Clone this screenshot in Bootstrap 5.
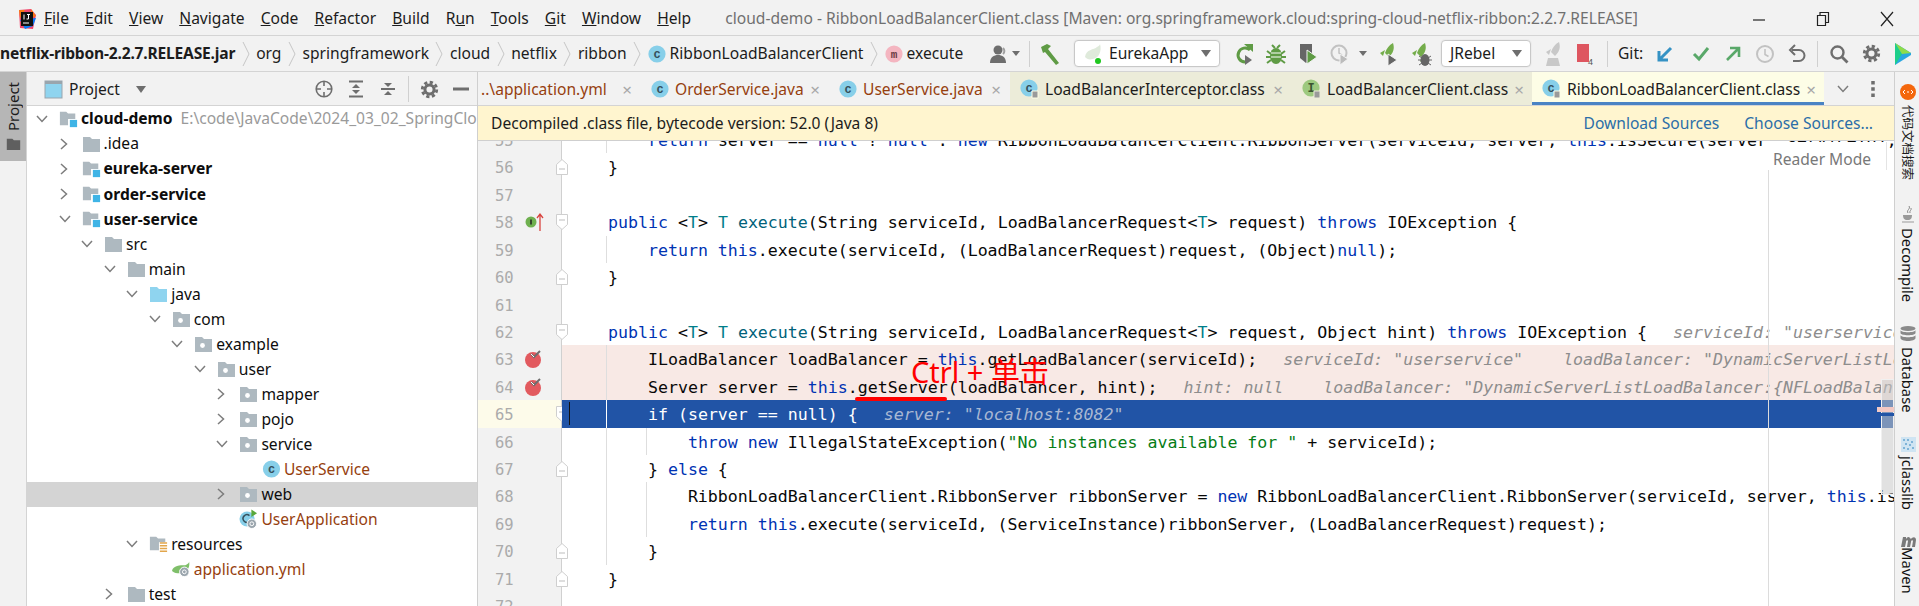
<!DOCTYPE html>
<html lang="en"><head><meta charset="utf-8"><title>IDE</title>
<link rel="stylesheet" href="https://cdn.jsdelivr.net/npm/bootstrap@5.3.0/dist/css/bootstrap.min.css">
<style>
html,body{margin:0;height:606px;overflow:hidden}
body{font:15.6px/1.3 "Noto Sans","Noto Sans CJK SC",sans-serif;color:#1c1c1c;background:#f2f2f2}
svg{display:block;flex:none}
.ide-root{width:1919px;height:606px}
.menu-bar{height:36px;border-bottom:1px solid #d4d4d4;padding:2px 0 0 17px;flex:none}
.logo-slot{width:27px}
.menu-item{margin-right:16.1px}
.win-title{color:#707070;margin-left:18px;white-space:nowrap}
.win-btn{width:64px;display:flex;justify-content:center}
.tool-bar{height:36px;border-bottom:1px solid #d4d4d4;flex:none}
.crumbs{width:985px;white-space:nowrap;flex:none}
.crumb-sep{width:21px;display:flex;justify-content:center;flex:none}
.jar{letter-spacing:-.2px}
.crumb-ico{margin-right:4px}
.user-slot{width:35px;flex:none;gap:3px;padding-left:4px}
.combo{height:27px;background:#fff;border:1px solid #c8c8c8;border-radius:4px;box-shadow:0 0 0 1px #ececec;padding:0 8px;flex:none}
.combo-a{width:146px;margin-left:8px}
.combo-b{width:90px;margin-left:4px}
.tri{width:0;height:0;border-left:5px solid transparent;border-right:5px solid transparent;border-top:7px solid #6e6e6e;flex:none}
.tri-sm{border-left-width:4px;border-right-width:4px;border-top-width:5px}
.slot{width:32px;display:flex;justify-content:center;flex:none}
.slot-t{width:14px}
.ml-3px{margin-left:3px}.ml-4px{margin-left:4px}.ml-6px{margin-left:6px}.ml-8px{margin-left:8px}
.v-sep{width:1px;height:26px;background:#d0d0d0;flex:none}
.sep-a{margin-left:9px;margin-right:4px}
.sep-b{margin:0 10px 0 6px}
.sep-c{margin:0 5px 0 4px}
.sep-d{margin:0 4px}
.git-lbl{width:31px;flex:none}
.left-strip{width:27px;border-right:1px solid #d4d4d4;flex:none}
.strip-btn{background:#b6b6b6;height:89px;padding-top:10px;gap:7px}
.vtext{writing-mode:vertical-rl;white-space:nowrap;font-size:15px;line-height:1}
.vup{transform:rotate(180deg)}
.side-panel{width:451px;border-right:1px solid #cfcfcf;flex:none;background:#fff}
.panel-head{height:34px;background:#f2f2f2;border-bottom:1px solid #d4d4d4;padding:1px 0 0 17px;flex:none}
.ph-title{margin:0 16px 0 6px}
.tree-row{height:25.05px;padding-left:calc(8px + 22.55px*var(--lv));white-space:nowrap;color:#0d0d0d;flex:none}
.tree-row.selected{background:#d4d4d4}
.tw{width:24px;flex:none}
.ti{width:19px;flex:none;margin-right:3px}
.bold{font-weight:700}
.muted-path{color:#9a9a9a;margin-left:8px}
.mod{color:#96400f}
.tab-bar{height:34px;background:#f2f2f2;border-bottom:1px solid #d4d4d4;flex:none}
.tab-x{color:#a8a8a8;font-size:17px;flex:none;margin-left:auto;line-height:1}
.ed-tab{height:33px;white-space:nowrap;flex:none;padding:1px 9px 0 10px;gap:6px}
.tw1{width:163px;padding-left:3px}.tw2{width:188px}.tw3{width:181px}.tw4{width:282px}.tw5{width:240px}.tw6{width:292px}
.tab-c{background:#ececd9}
.tab-on{background:#fdfde6;box-shadow:inset 0 -3px 0 #4a83c4}
.tab-more{width:70px;padding-left:12px;gap:21px;flex:none}
.notice{height:35px;background:#fff5cf;border-bottom:1px solid #cfcfcf;padding-left:13px;flex:none;position:relative;z-index:2;white-space:nowrap}
.notice a{color:#2b6ea8;text-decoration:none}
.notice-links{gap:25px;padding-right:21px}
.code-pane{background:#fff}
.code-scroll{margin-top:-15px}
.cl{height:27.43px;white-space:pre;font:16.6px/30px "DejaVu Sans Mono",monospace;color:#080808;flex:none}
.gut{width:84px;flex:none;background:#f2f2f2;border-right:1px solid #d0d0d0;position:relative;color:#ababab;padding-left:17px;font-size:15.5px}
.txt{flex:1;overflow:hidden;padding-left:6px;position:relative}
.g1{background:linear-gradient(#dedede,#dedede) no-repeat 44px 0/1px 100%}
.g2{background:linear-gradient(#dedede,#dedede) no-repeat 44px 0/1px 100%,linear-gradient(#dedede,#dedede) no-repeat 84px 0/1px 100%}
.g1.bp{background-color:#f8e9e5}
.cur{background:linear-gradient(#fff,#fff) no-repeat 44px 0/1px 100%,#2154a6;color:#fff}
.gcur{background:#fdfbea}
.caret-bar{position:absolute;left:7px;top:2px;width:1px;height:23px;background:#111}
.k{color:#0033b3}.t{color:#007e8a}.m{color:#00627a}.s{color:#067d17}
.hint{color:#8d8d8d;font-style:italic}
.cur .hint{color:#a9b8d3}
.hg1{margin-left:26px}.hg2{margin-left:40px}
.gico{position:absolute;left:46px;top:4px}
.fold{position:absolute;left:77px;top:5px}
.reader{position:absolute;top:1px;left:1290px;width:119px;height:28px;background:#fff;color:#787878;padding-left:5px;line-height:34px;border-right:1px solid #e4e4e4}
.margin-line{position:absolute;left:1290px;top:29px;bottom:0;width:1px;background:#dcdcdc}
.scroll-thumb{position:absolute;right:0;top:238px;width:13px;height:116px;background:rgba(200,200,200,.55);border:1px solid #f0f0f0}
.mark-a{position:absolute;right:0;top:266px;width:17px;height:5px;background:#f3c9c4}
.mark-b{position:absolute;right:0;top:272px;width:17px;height:3px;background:#2154a6}
.note-txt{position:absolute;left:433px;top:214px;color:#f00;font:29px/34px "Noto Sans","Noto Sans CJK SC",sans-serif;white-space:nowrap}
.note-line{position:absolute;left:377px;top:256px;width:92px;height:4px;border-radius:2px;background:#f00}
.right-strip{width:25px;border-left:1px solid #cfcfcf;flex:none;padding:12px 0 0 2px}
.rs-l{font-size:14.8px;line-height:1;color:#111}
.rs-cn{text-orientation:sideways;font:12.5px/1 "Noto Sans CJK SC",sans-serif;height:75px}
.m5{margin-bottom:5px}.m24{margin-bottom:24px}.m26{margin-bottom:26px}.m4{margin-bottom:4px}
</style></head>
<body>
<svg width="0" height="0" style="position:absolute">
<defs>
<symbol id="chev-r" viewBox="0 0 12 14"><path d="M3 2l5.500 5L3 12" fill="none" stroke="#7d7d7d" stroke-width="1.500"/></symbol>
<symbol id="chev-d" viewBox="0 0 14 12"><path d="M2 3l5 5.500L12 3" fill="none" stroke="#7d7d7d" stroke-width="1.500"/></symbol>
<symbol id="thin" viewBox="0 0 10 26"><path d="M2 1l6 12-6 12" fill="none" stroke="#c6c6c6"/></symbol>
<symbol id="folder" viewBox="0 0 19 16"><path d="M1 1h7l2 2h8v13H1z" fill="#aeb9c0"/></symbol>
<symbol id="pkg" viewBox="0 0 19 16"><path d="M1 1h7l2 2h8v13H1z" fill="#aeb9c0"/><circle cx="8.500" cy="9.500" r="2.400" fill="#fff"/></symbol>
<symbol id="src" viewBox="0 0 19 16"><path d="M1 1h7l2 2h8v13H1z" fill="#8fd4ef"/></symbol>
<symbol id="modf" viewBox="0 0 21 18"><path d="M1 1h7l2 2h8v13H1z" fill="#aeb9c0"/><path d="M10 9h10v9H10z" fill="#fff"/><path d="M12 10h8v8h-8z" fill="#3fb4e6"/></symbol>
<symbol id="resf" viewBox="0 0 21 18"><path d="M1 1h7l2 2h8v13H1z" fill="#aeb9c0"/><path d="M11 7h10v11H11z" fill="#fff"/><path d="M12 8h8M12 11h8M12 14h8M12 17h8" stroke="#e2a64c" stroke-width="1.600"/></symbol>
<symbol id="cls" viewBox="0 0 18 18"><circle cx="9" cy="9" r="8.600" fill="#87cfe9"/><text x="9" y="12.600" text-anchor="middle" font-family="Liberation Mono" font-size="12" font-weight="700" fill="#35505c">c</text></symbol>
<symbol id="clsl" viewBox="0 0 19 20"><circle cx="9" cy="9" r="8.600" fill="#87cfe9"/><text x="9" y="12.600" text-anchor="middle" font-family="Liberation Mono" font-size="12" font-weight="700" fill="#35505c">c</text><path d="M12 12h6v7h-6z" fill="#9a9a9a" stroke="#fdfde6"/></symbol>
<symbol id="ifl" viewBox="0 0 19 20"><circle cx="9" cy="9" r="8.600" fill="#9dc97f"/><text x="9" y="13" text-anchor="middle" font-family="Liberation Mono" font-size="12" font-weight="700" fill="#3a5430">I</text><path d="M12 12h6v7h-6z" fill="#9a9a9a" stroke="#ececd9"/></symbol>
<symbol id="boot" viewBox="0 0 20 20"><circle cx="8.500" cy="10" r="8" fill="#87cfe9"/><path d="M11 6.500a4 4 0 1 0 0 6" fill="none" stroke="#35505c" stroke-width="1.600"/><path d="M13 0l6 4-6 4z" fill="#59a83c"/><circle cx="13.500" cy="15" r="5" fill="#9aa5ad" stroke="#fff"/><circle cx="13.500" cy="15" r="2" fill="none" stroke="#fff"/></symbol>
<symbol id="yml" viewBox="0 0 20 18"><path d="M0 11C1 5 9 5 13 5c2 0 5-2 5-4 1 5-1 10-6 12-4 1-8 1-12-2z" fill="#7fbf6a"/><circle cx="13" cy="12" r="5" fill="#9aa5ad" stroke="#fff"/><circle cx="13" cy="12" r="2" fill="none" stroke="#fff"/></symbol>
<symbol id="fold-o" viewBox="0 0 14 18"><path d="M1.500 1.500h11v10L7 16.500l-5.500-5z" fill="#fff" stroke="#cfcfcf"/><path d="M4 7h6" stroke="#bdbdbd"/></symbol>
<symbol id="fold-c" viewBox="0 0 14 18"><path d="M1.500 16.500h11v-10L7 1.500l-5.500 5z" fill="#fff" stroke="#cfcfcf"/><path d="M4 11h6" stroke="#bdbdbd"/></symbol>
<symbol id="brk" viewBox="0 0 20 20"><circle cx="9" cy="11" r="8" fill="#e25a5f"/><path d="M7 5l3 3 6-6" fill="none" stroke="#6e6e6e" stroke-width="2"/><path d="M7 5l3 3" stroke="#fff"/></symbol>
<symbol id="gear" viewBox="0 0 20 20"><circle cx="10" cy="10" r="4.800" fill="none" stroke="#6e6e6e" stroke-width="3.200"/><circle cx="10" cy="10" r="7.600" fill="none" stroke="#6e6e6e" stroke-width="3" stroke-dasharray="3.400 2.570"/></symbol>
<symbol id="rocket" viewBox="0 0 22 24"><path d="M15 1c2 6 0 10-4 14l-4-4C9 6 11 3 15 1zM7 8l-5 3 3 3zM12 14l-2 6 4-3z" fill="#74ad4b"/></symbol>
</defs></svg>

<div class="ide-root d-flex flex-column">
 <div class="menu-bar d-flex align-items-center">
  <div class="logo-slot"><svg width="20" height="22" viewBox="0 0 20 22"><path d="M2 2l12-1 5 6-3 14-13-1z" fill="#f0466c"/><path d="M2 2h6l-5 8zM14 1l5 7-5 2z" fill="#f97a12"/><path d="M3 12l5 9 8-3 3-8z" fill="#087cfa"/><rect x="4" y="4" width="12" height="14" fill="#111"/><path d="M6 15h6" stroke="#fff"/><path d="M7 6.500v5M10 6.500h3M11.500 6.500v4.500h-2" stroke="#fff" fill="none"/></svg></div>
  <span class="menu-item"><u>F</u>ile</span><span class="menu-item"><u>E</u>dit</span><span class="menu-item"><u>V</u>iew</span><span class="menu-item"><u>N</u>avigate</span><span class="menu-item"><u>C</u>ode</span><span class="menu-item"><u>R</u>efactor</span><span class="menu-item"><u>B</u>uild</span><span class="menu-item">R<u>u</u>n</span><span class="menu-item"><u>T</u>ools</span><span class="menu-item"><u>G</u>it</span><span class="menu-item"><u>W</u>indow</span><span class="menu-item"><u>H</u>elp</span>
  <span class="win-title">cloud-demo - RibbonLoadBalancerClient.class [Maven: org.springframework.cloud:spring-cloud-netflix-ribbon:2.2.7.RELEASE]</span>
  <div class="win-btn ms-auto"><svg width="14" height="14"><path d="M1 8h12" stroke="#222" stroke-width="1.200"/></svg></div>
  <div class="win-btn"><svg width="14" height="16"><path d="M1.500 4.500h8v10h-8zM4 4V1.500h8.500v10H10" fill="none" stroke="#222" stroke-width="1.200"/></svg></div>
  <div class="win-btn"><svg width="16" height="16"><path d="M2 1l12 14M14 1L2 15" stroke="#222" stroke-width="1.200"/></svg></div>
 </div>

 <div class="tool-bar d-flex align-items-center">
  <div class="crumbs d-flex align-items-center">
   <span class="bold jar">netflix-ribbon-2.2.7.RELEASE.jar</span>
   <span class="crumb-sep"><svg width="10" height="26"><use href="#thin"/></svg></span><span>org</span>
   <span class="crumb-sep"><svg width="10" height="26"><use href="#thin"/></svg></span><span>springframework</span>
   <span class="crumb-sep"><svg width="10" height="26"><use href="#thin"/></svg></span><span>cloud</span>
   <span class="crumb-sep"><svg width="10" height="26"><use href="#thin"/></svg></span><span>netflix</span>
   <span class="crumb-sep"><svg width="10" height="26"><use href="#thin"/></svg></span><span>ribbon</span>
   <span class="crumb-sep"><svg width="10" height="26"><use href="#thin"/></svg></span>
   <svg class="crumb-ico" width="18" height="18"><use href="#cls"/></svg><span>RibbonLoadBalancerClient</span>
   <span class="crumb-sep"><svg width="10" height="26"><use href="#thin"/></svg></span>
   <svg class="crumb-ico" width="18" height="18" viewBox="0 0 18 18"><circle cx="9" cy="9" r="8.600" fill="#f4b5c0"/><text x="9" y="12.600" text-anchor="middle" font-family="Liberation Mono" font-size="11" font-weight="700" fill="#6b3a44">m</text></svg><span>execute</span>
  </div>
  <div class="user-slot d-flex align-items-center"><svg width="20" height="20" viewBox="0 0 20 20"><circle cx="9" cy="6" r="4.500" fill="#6e6e6e"/><path d="M1 19c0-6 4-8 8-8s8 2 8 8z" fill="#6e6e6e"/><path d="M14 4a4 4 0 0 1 0 6" stroke="#a0a0a0" stroke-width="2" fill="none"/></svg><span class="tri tri-sm"></span></div>
  <div class="v-sep sep-a"></div>
  <div class="slot"><svg width="22" height="24" viewBox="0 0 22 24"><path d="M2 5l6-3 4 2-3 3 11 14-3 2L6 10 4 11z" fill="#5f9b45"/></svg></div>
  <div class="combo combo-a d-flex align-items-center gap-1"><svg width="22" height="22" viewBox="0 0 22 22"><path d="M2 14C3 6 11 7 14 4c2-1 3-2 3-3 2 7-1 14-7 15-4 1-6 0-8-2z" fill="#dfeadb"/><circle cx="15" cy="18" r="3" fill="#1fc71f"/></svg><span>EurekaApp</span><span class="tri ms-auto"></span></div>
  <div class="slot ml-8px"><svg width="20" height="22" viewBox="0 0 20 22"><path d="M16 7a7 7 0 1 0-5 12" fill="none" stroke="#5f9b45" stroke-width="3"/><path d="M10 1h9v8z" fill="#5f9b45"/><path d="M11 12l7 5-7 5z" fill="#6e6e6e"/></svg></div>
  <div class="slot"><svg width="20" height="22" viewBox="0 0 20 22"><ellipse cx="10" cy="13" rx="6" ry="8" fill="#5f9b45"/><path d="M1 8l4 3M19 8l-4 3M0 14h5M20 14h-5M1 20l4-3M19 20l-4-3M6 2l3 3M14 2l-3 3" stroke="#5f9b45" stroke-width="2"/><path d="M5 10h10M5 14h10" stroke="#fff"/></svg></div>
  <div class="slot"><svg width="20" height="24" viewBox="0 0 20 24"><path d="M2 2h12v9l-2 8-4 2-6-5z" fill="#666"/><path d="M9 8l10 7-10 7z" fill="#5f9b45" stroke="#f2f2f2"/></svg></div>
  <div class="slot"><svg width="20" height="24" viewBox="0 0 20 24"><circle cx="9" cy="11" r="7.500" fill="none" stroke="#c2c2c2" stroke-width="2"/><path d="M9 6v5l3 2" stroke="#c2c2c2" stroke-width="1.500" fill="none"/><path d="M10 12l8 5-8 6z" fill="#bcbcbc" stroke="#f2f2f2"/></svg></div>
  <div class="slot slot-t"><span class="tri tri-sm"></span></div>
  <div class="slot ml-3px"><svg width="22" height="26" viewBox="0 0 22 26"><use href="#rocket"/><path d="M10 13l9 6-9 6z" fill="#666" stroke="#f2f2f2"/></svg></div>
  <div class="slot"><svg width="22" height="26" viewBox="0 0 22 26"><use href="#rocket"/><ellipse cx="15" cy="19" rx="4.500" ry="6" fill="#666"/><path d="M9 15l3 2M21 15l-3 2M8 19h3M22 19h-3M9 24l3-2M21 24l-3-2" stroke="#666"/></svg></div>
  <div class="combo combo-b d-flex align-items-center"><span>JRebel</span><span class="tri ms-auto"></span></div>
  <div class="slot ml-6px"><svg width="22" height="26" viewBox="0 0 22 26"><path d="M17 1c2 6 0 10-4 14l-4-4C11 6 13 3 17 1zM9 8l-5 3 3 3z" fill="#c8c8c8"/><path d="M6 17h10l2 8H4z" fill="#c8c8c8"/></svg></div>
  <div class="slot"><svg width="20" height="24" viewBox="0 0 20 24"><rect x="2" y="2" width="12" height="18" fill="#de5660"/><text x="13" y="23" font-family="Liberation Sans" font-size="9" fill="#555">4</text></svg></div>
  <div class="v-sep sep-b"></div>
  <span class="git-lbl">Git:</span>
  <div class="slot"><svg width="18" height="18" viewBox="0 0 18 18"><path d="M15 3L4 14M3 6v9h9" fill="none" stroke="#3592c4" stroke-width="3"/></svg></div>
  <div class="slot ml-4px"><svg width="18" height="18" viewBox="0 0 18 18"><path d="M2 9l5 5L16 3" fill="none" stroke="#59a869" stroke-width="3"/></svg></div>
  <div class="slot"><svg width="18" height="18" viewBox="0 0 18 18"><path d="M3 15L14 4M6 3h9v9" fill="none" stroke="#59a869" stroke-width="2.600"/></svg></div>
  <div class="slot"><svg width="20" height="20" viewBox="0 0 20 20"><circle cx="10" cy="10" r="8" fill="none" stroke="#c2c2c2" stroke-width="2"/><path d="M10 5v5.500l3.500 2" fill="none" stroke="#c2c2c2" stroke-width="1.600"/></svg></div>
  <div class="slot"><svg width="20" height="20" viewBox="0 0 20 20"><path d="M5 6h7a5 5 0 0 1 0 11H6" fill="none" stroke="#6e6e6e" stroke-width="2"/><path d="M8 1L3 6l5 5" fill="none" stroke="#6e6e6e" stroke-width="2"/></svg></div>
  <div class="v-sep sep-c"></div>
  <div class="slot"><svg width="20" height="20" viewBox="0 0 20 20"><circle cx="8.500" cy="8.500" r="6" fill="none" stroke="#6e6e6e" stroke-width="2.400"/><path d="M13 13l5.500 5.500" stroke="#6e6e6e" stroke-width="2.800"/></svg></div>
  <div class="slot"><svg width="19" height="19"><use href="#gear"/></svg></div>
  <div class="slot"><svg width="20" height="24" viewBox="0 0 20 24"><path d="M2 1l16 10v2L2 23z" fill="#29a7e1"/><path d="M2 1v22l7-11z" fill="#1dcf8a"/><path d="M2 1l7 11 9-1z" fill="#8fdc4a"/></svg></div>
 </div>

 <div class="d-flex flex-grow-1 overflow-hidden">
  <div class="left-strip">
   <div class="strip-btn d-flex flex-column align-items-center"><span class="vtext vup">Project</span><svg width="15" height="12" viewBox="0 0 19 16" preserveAspectRatio="none"><path d="M1 1h7l2 2h8v13H1z" fill="#5f5f5f"/></svg></div>
  </div>

  <div class="side-panel d-flex flex-column overflow-hidden">
   <div class="panel-head d-flex align-items-center">
    <svg width="19" height="19" viewBox="0 0 19 19"><rect x="1" y="1" width="17" height="17" fill="#8fd4ef" stroke="#9aa5ad"/><rect x="1" y="1" width="17" height="3" fill="#9aa5ad"/></svg>
    <span class="ph-title">Project</span><span class="tri"></span>
    <div class="slot ms-auto"><svg width="18" height="18" viewBox="0 0 18 18"><circle cx="9" cy="9" r="7.800" fill="none" stroke="#6e6e6e" stroke-width="1.600"/><path d="M9 1v5M9 12v5M1 9h5M12 9h5" stroke="#6e6e6e" stroke-width="1.600"/></svg></div>
    <div class="slot"><svg width="16" height="18" viewBox="0 0 16 18"><path d="M1 1.500h14M1 16.500h14" stroke="#6e6e6e" stroke-width="2"/><path d="M8 4l4 4H4zM8 14l4-4H4z" fill="#6e6e6e"/></svg></div>
    <div class="slot"><svg width="16" height="18" viewBox="0 0 16 18"><path d="M1 9h14" stroke="#6e6e6e" stroke-width="2"/><path d="M8 7L4 3h8zM8 11l4 4H4z" fill="#6e6e6e"/></svg></div>
    <div class="v-sep sep-d"></div>
    <div class="slot"><svg width="19" height="19"><use href="#gear"/></svg></div>
    <div class="slot"><svg width="16" height="4"><path d="M0 2h16" stroke="#6e6e6e" stroke-width="3"/></svg></div>
   </div>
   <div class="tree-row d-flex align-items-center" style="--lv:0"><span class="tw"><svg width="14" height="12"><use href="#chev-d"/></svg></span><svg class="ti" width="19" height="18"><use href="#modf"/></svg><span class="bold">cloud-demo</span><span class="muted-path">E:\code\JavaCode\2024_03_02_SpringCloud</span></div>
   <div class="tree-row d-flex align-items-center" style="--lv:1"><span class="tw"><svg width="12" height="14"><use href="#chev-r"/></svg></span><svg class="ti" width="19" height="16"><use href="#folder"/></svg><span>.idea</span></div>
   <div class="tree-row d-flex align-items-center" style="--lv:1"><span class="tw"><svg width="12" height="14"><use href="#chev-r"/></svg></span><svg class="ti" width="19" height="18"><use href="#modf"/></svg><span class="bold">eureka-server</span></div>
   <div class="tree-row d-flex align-items-center" style="--lv:1"><span class="tw"><svg width="12" height="14"><use href="#chev-r"/></svg></span><svg class="ti" width="19" height="18"><use href="#modf"/></svg><span class="bold">order-service</span></div>
   <div class="tree-row d-flex align-items-center" style="--lv:1"><span class="tw"><svg width="14" height="12"><use href="#chev-d"/></svg></span><svg class="ti" width="19" height="18"><use href="#modf"/></svg><span class="bold">user-service</span></div>
   <div class="tree-row d-flex align-items-center" style="--lv:2"><span class="tw"><svg width="14" height="12"><use href="#chev-d"/></svg></span><svg class="ti" width="19" height="16"><use href="#folder"/></svg><span>src</span></div>
   <div class="tree-row d-flex align-items-center" style="--lv:3"><span class="tw"><svg width="14" height="12"><use href="#chev-d"/></svg></span><svg class="ti" width="19" height="16"><use href="#folder"/></svg><span>main</span></div>
   <div class="tree-row d-flex align-items-center" style="--lv:4"><span class="tw"><svg width="14" height="12"><use href="#chev-d"/></svg></span><svg class="ti" width="19" height="16"><use href="#src"/></svg><span>java</span></div>
   <div class="tree-row d-flex align-items-center" style="--lv:5"><span class="tw"><svg width="14" height="12"><use href="#chev-d"/></svg></span><svg class="ti" width="19" height="16"><use href="#pkg"/></svg><span>com</span></div>
   <div class="tree-row d-flex align-items-center" style="--lv:6"><span class="tw"><svg width="14" height="12"><use href="#chev-d"/></svg></span><svg class="ti" width="19" height="16"><use href="#pkg"/></svg><span>example</span></div>
   <div class="tree-row d-flex align-items-center" style="--lv:7"><span class="tw"><svg width="14" height="12"><use href="#chev-d"/></svg></span><svg class="ti" width="19" height="16"><use href="#pkg"/></svg><span>user</span></div>
   <div class="tree-row d-flex align-items-center" style="--lv:8"><span class="tw"><svg width="12" height="14"><use href="#chev-r"/></svg></span><svg class="ti" width="19" height="16"><use href="#pkg"/></svg><span>mapper</span></div>
   <div class="tree-row d-flex align-items-center" style="--lv:8"><span class="tw"><svg width="12" height="14"><use href="#chev-r"/></svg></span><svg class="ti" width="19" height="16"><use href="#pkg"/></svg><span>pojo</span></div>
   <div class="tree-row d-flex align-items-center" style="--lv:8"><span class="tw"><svg width="14" height="12"><use href="#chev-d"/></svg></span><svg class="ti" width="19" height="16"><use href="#pkg"/></svg><span>service</span></div>
   <div class="tree-row d-flex align-items-center" style="--lv:9"><span class="tw"></span><svg class="ti" width="18" height="18"><use href="#cls"/></svg><span class="mod">UserService</span></div>
   <div class="tree-row selected d-flex align-items-center" style="--lv:8"><span class="tw"><svg width="12" height="14"><use href="#chev-r"/></svg></span><svg class="ti" width="19" height="16"><use href="#pkg"/></svg><span>web</span></div>
   <div class="tree-row d-flex align-items-center" style="--lv:8"><span class="tw"></span><svg class="ti" width="20" height="20"><use href="#boot"/></svg><span class="mod">UserApplication</span></div>
   <div class="tree-row d-flex align-items-center" style="--lv:4"><span class="tw"><svg width="14" height="12"><use href="#chev-d"/></svg></span><svg class="ti" width="19" height="18"><use href="#resf"/></svg><span>resources</span></div>
   <div class="tree-row d-flex align-items-center" style="--lv:5"><span class="tw"></span><svg class="ti" width="20" height="18"><use href="#yml"/></svg><span class="mod">application.yml</span></div>
   <div class="tree-row d-flex align-items-center" style="--lv:3"><span class="tw"><svg width="12" height="14"><use href="#chev-r"/></svg></span><svg class="ti" width="19" height="16"><use href="#folder"/></svg><span>test</span></div>
  </div>

  <div class="d-flex flex-column flex-grow-1 overflow-hidden">
   <div class="tab-bar d-flex">
    <div class="ed-tab tw1 d-flex align-items-center"><span class="mod">..\application.yml</span><span class="tab-x">×</span></div>
    <div class="ed-tab tw2 d-flex align-items-center"><svg width="18" height="18"><use href="#cls"/></svg><span class="mod">OrderService.java</span><span class="tab-x">×</span></div>
    <div class="ed-tab tw3 d-flex align-items-center"><svg width="18" height="18"><use href="#cls"/></svg><span class="mod">UserService.java</span><span class="tab-x">×</span></div>
    <div class="ed-tab tw4 tab-c d-flex align-items-center"><svg width="19" height="20"><use href="#clsl"/></svg><span>LoadBalancerInterceptor.class</span><span class="tab-x">×</span></div>
    <div class="ed-tab tw5 tab-c d-flex align-items-center"><svg width="19" height="20"><use href="#ifl"/></svg><span>LoadBalancerClient.class</span><span class="tab-x">×</span></div>
    <div class="ed-tab tw6 tab-on d-flex align-items-center"><svg width="19" height="20"><use href="#clsl"/></svg><span>RibbonLoadBalancerClient.class</span><span class="tab-x">×</span></div>
    <div class="tab-more d-flex align-items-center"><svg width="14" height="12"><use href="#chev-d"/></svg><svg width="4" height="16"><path d="M2 0v16" stroke="#6e6e6e" stroke-width="3.500" stroke-dasharray="3.500 2.750"/></svg></div>
   </div>
   <div class="notice d-flex align-items-center justify-content-between"><span>Decompiled .class file, bytecode version: 52.0 (Java 8)</span><div class="notice-links d-flex"><a href="#">Download Sources</a><a href="#">Choose Sources...</a></div></div>
   <div class="code-pane flex-grow-1 position-relative overflow-hidden">
    <div class="code-scroll d-flex flex-column">
     <div class="cl d-flex"><div class="gut">55</div><div class="txt g1">        <span class="k">return</span> server == <span class="k">null</span> ? <span class="k">null</span> : <span class="k">new</span> RibbonLoadBalancerClient.RibbonServer(serviceId, server, <span class="k">this</span>.isSecure(server, serviceId), serverIntrospector(serviceId).getMetadata(server));</div></div>
     <div class="cl d-flex"><div class="gut">56<svg class="fold" width="14" height="18"><use href="#fold-c"/></svg></div><div class="txt">    }</div></div>
     <div class="cl d-flex"><div class="gut">57</div><div class="txt"></div></div>
     <div class="cl d-flex"><div class="gut">58<svg class="gico" width="22" height="20" viewBox="0 0 22 20"><circle cx="7" cy="10" r="5.500" fill="#6fb04f"/><path d="M7 7.500v5" stroke="#222" stroke-width="1.500"/><path d="M16 19V3M13 6l3-4 3 4" fill="none" stroke="#d9443f" stroke-width="1.300"/></svg><svg class="fold" width="14" height="18"><use href="#fold-o"/></svg></div><div class="txt">    <span class="k">public</span> &lt;<span class="t">T</span>&gt; <span class="t">T</span> <span class="m">execute</span>(String serviceId, LoadBalancerRequest&lt;<span class="t">T</span>&gt; request) <span class="k">throws</span> IOException {</div></div>
     <div class="cl d-flex"><div class="gut">59</div><div class="txt g1">        <span class="k">return this</span>.execute(serviceId, (LoadBalancerRequest)request, (Object)<span class="k">null</span>);</div></div>
     <div class="cl d-flex"><div class="gut">60<svg class="fold" width="14" height="18"><use href="#fold-c"/></svg></div><div class="txt">    }</div></div>
     <div class="cl d-flex"><div class="gut">61</div><div class="txt"></div></div>
     <div class="cl d-flex"><div class="gut">62<svg class="fold" width="14" height="18"><use href="#fold-o"/></svg></div><div class="txt">    <span class="k">public</span> &lt;<span class="t">T</span>&gt; <span class="t">T</span> <span class="m">execute</span>(String serviceId, LoadBalancerRequest&lt;<span class="t">T</span>&gt; request, Object hint) <span class="k">throws</span> IOException {<span class="hint hg1">serviceId: "userservice"</span></div></div>
     <div class="cl d-flex"><div class="gut">63<svg class="gico" width="20" height="20"><use href="#brk"/></svg></div><div class="txt g1 bp">        ILoadBalancer loadBalancer = <span class="k">this</span>.getLoadBalancer(serviceId);<span class="hint hg1">serviceId: "userservice"</span><span class="hint hg2">loadBalancer: "DynamicServerListLoadBalancer:{NFLoadBalancer"</span></div></div>
     <div class="cl d-flex"><div class="gut">64<svg class="gico" width="20" height="20"><use href="#brk"/></svg></div><div class="txt g1 bp">        Server server = <span class="k">this</span>.getServer(loadBalancer, hint);<span class="hint hg1">hint: null</span><span class="hint hg2">loadBalancer: "DynamicServerListLoadBalancer:{NFLoadBalancer:name=userservice"</span></div></div>
     <div class="cl d-flex"><div class="gut gcur">65<svg class="fold" width="14" height="18"><use href="#fold-o"/></svg></div><div class="txt cur"><span class="caret-bar"></span>        <span>if</span> (server == null) {<span class="hint hg1">server: "localhost:8082"</span></div></div>
     <div class="cl d-flex"><div class="gut">66</div><div class="txt g2">            <span class="k">throw new</span> IllegalStateException(<span class="s">"No instances available for "</span> + serviceId);</div></div>
     <div class="cl d-flex"><div class="gut">67<svg class="fold" width="14" height="18"><use href="#fold-c"/></svg></div><div class="txt g1">        } <span class="k">else</span> {</div></div>
     <div class="cl d-flex"><div class="gut">68</div><div class="txt g2">            RibbonLoadBalancerClient.RibbonServer ribbonServer = <span class="k">new</span> RibbonLoadBalancerClient.RibbonServer(serviceId, server, <span class="k">this</span>.isSecure(server, serviceId), serverIntrospector);</div></div>
     <div class="cl d-flex"><div class="gut">69</div><div class="txt g2">            <span class="k">return this</span>.execute(serviceId, (ServiceInstance)ribbonServer, (LoadBalancerRequest)request);</div></div>
     <div class="cl d-flex"><div class="gut">70<svg class="fold" width="14" height="18"><use href="#fold-c"/></svg></div><div class="txt g1">        }</div></div>
     <div class="cl d-flex"><div class="gut">71<svg class="fold" width="14" height="18"><use href="#fold-c"/></svg></div><div class="txt">    }</div></div>
     <div class="cl d-flex"><div class="gut">72</div><div class="txt"></div></div>
    </div>
    <div class="margin-line"></div>
    <div class="reader">Reader Mode</div>
    <div class="scroll-thumb"></div><div class="mark-a"></div><div class="mark-b"></div>
    <div class="note-txt">Ctrl + 单击</div>
    <div class="note-line"></div>
   </div>
  </div>

  <div class="right-strip d-flex flex-column align-items-center">
   <svg class="m5" width="16" height="16" viewBox="0 0 16 16"><circle cx="8" cy="8" r="8" fill="#f4670c"/><path d="M5 6L3 8l2 2M11 6l2 2-2 2M7 8h2" fill="none" stroke="#fff"/></svg>
   <span class="vtext rs-cn m26">代码文档搜索</span>
   <svg class="m5" width="14" height="17" viewBox="0 0 14 17"><path d="M8 0c2 3-3 4-1 7M10 2c1 2-2 3-1 5" fill="none" stroke="#8a8a8a"/><path d="M2 9h9c0 3-1 5-4.500 5S2 12 2 9z" fill="#9a9a9a"/><path d="M1 16h12" stroke="#9a9a9a"/></svg>
   <span class="vtext rs-l m24">Decompile</span>
   <svg class="m5" width="16" height="16" viewBox="0 0 16 16"><ellipse cx="8" cy="2.500" rx="7.500" ry="2.500" fill="#8a8a8a"/><path d="M.5 4v3c0 3 15 3 15 0V4c0 3-15 3-15 0zM.5 9v3c0 4 15 4 15 0V9c0 3-15 3-15 0z" fill="#8a8a8a"/></svg>
   <span class="vtext rs-l m24">Database</span>
   <svg class="m4" width="15" height="15" viewBox="0 0 15 15"><rect width="15" height="15" fill="#cfe4f2"/><path d="M2 2h2v2H2zM6 2h2v2H6zM10 4h2v2h-2zM4 6h2v2H4zM8 7h2v2H8zM2 10h2v2H2zM6 11h2v2H6zM11 10h2v2h-2z" fill="#7fb4d8"/></svg>
   <span class="vtext rs-l m26">jclasslib</span>
   <svg width="17" height="11" viewBox="0 0 17 11"><path d="M1 11L3 1h3v2c1-2 3-3 4-1l1 1c1-2 5-3 5 1l-1 7h-3l1-6c0-1-2-1-2 1l-1 5H7l1-6c0-1-2-1-2 1l-1 5z" fill="#7a7a7a"/></svg>
   <span class="vtext rs-l">Maven</span>
  </div>
 </div>
</div>
</body></html>
